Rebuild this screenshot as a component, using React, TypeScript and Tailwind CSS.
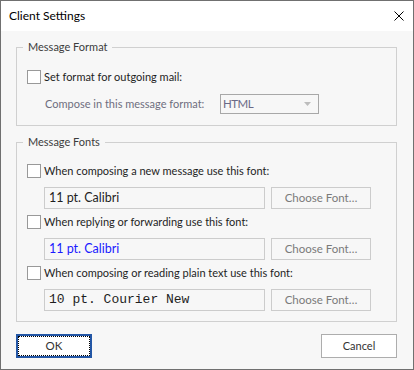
import React from "react";

const font = { fontFamily: 'Lato, "Open Sans", sans-serif' };

function Check({ label }: { label: string }) {
  return (
    <div className="flex items-center h-[14px]">
      <div className="w-[14px] h-[14px] border border-[#999999] bg-white shrink-0" />
      <span className="ml-[3px] text-[11px] leading-[14px] text-[#1e1e1e] whitespace-nowrap">{label}</span>
    </div>
  );
}

function FontRow({ value, blue, mono }: { value: string; blue?: boolean; mono?: boolean }) {
  return (
    <div className="flex items-center mt-[9px] ml-[17px]">
      <div className="w-[221px] h-[22px] border border-[#cccccc] bg-[#f7f7f7] flex items-center pl-[4px]">
        {mono ? (
          <span className="text-[13px] text-[#1e1e1e] whitespace-nowrap" style={{ fontFamily: '"Liberation Mono", monospace' }}>
            {value}
          </span>
        ) : (
          <span className={"text-[12.5px] whitespace-nowrap " + (blue ? "text-[#1a1aff]" : "text-[#1e1e1e]")}>{value}</span>
        )}
      </div>
      <div className="ml-[6px] w-[100px] h-[22px] border border-[#cccccc] bg-[#f7f7f7] flex items-center justify-center text-[11.5px] text-[#7a7a7a]">
        Choose Font…
      </div>
    </div>
  );
}

export default function App() {
  return (
    <div className="w-[414px] h-[370px] border border-[#707070] bg-[#f7f7f7] flex flex-col" style={font}>
      <div className="h-[30px] bg-white flex items-center justify-between pl-[8px] pr-[9px] shrink-0">
        <span className="text-[12px] text-black">Client Settings</span>
        <svg width="10" height="10" viewBox="0 0 10 10">
          <path d="M0.5 0.5 L9.5 9.5 M9.5 0.5 L0.5 9.5" stroke="#000" strokeWidth="1" />
        </svg>
      </div>
      <div className="flex-1 pl-[15px] pr-[16px] pt-[8px]">
        <fieldset className="border border-[#d0d0d0] pb-[11px]">
          <legend className="ml-[6px] px-[5px] text-[11px] leading-[16px] text-[#3c3c3c]">Message Format</legend>
          <div className="pl-[10px] mt-[15px]">
            <Check label="Set format for outgoing mail:" />
            <div className="flex items-center mt-[10px] ml-[18px]">
              <span className="text-[11px] text-[#6e6e7e] w-[175px] whitespace-nowrap">Compose in this message format:</span>
              <div className="w-[99px] h-[20px] border border-[#a8a8a8] bg-[#f7f7f7] flex items-center justify-between pl-[2px] pr-[7px]">
                <span className="text-[11.5px] text-[#6a6a86] tracking-[-0.5px]">HTML</span>
                <svg width="7" height="4" viewBox="0 0 7 4">
                  <path d="M0 0 L7 0 L3.5 4 Z" fill="#bdbdbd" />
                </svg>
              </div>
            </div>
          </div>
        </fieldset>
        <fieldset className="border border-[#d0d0d0] mt-[8px] pb-[10px]">
          <legend className="ml-[6px] px-[5px] text-[11px] leading-[16px] text-[#3c3c3c]">Message Fonts</legend>
          <div className="pl-[10px] mt-[14px]">
            <Check label="When composing a new message use this font:" />
            <FontRow value="11 pt. Calibri" />
            <div className="mt-[6px]">
              <Check label="When replying or forwarding use this font:" />
            </div>
            <FontRow value="11 pt. Calibri" blue />
            <div className="mt-[6px]">
              <Check label="When composing or reading plain text use this font:" />
            </div>
            <FontRow value="10 pt. Courier New" mono />
          </div>
        </fieldset>
        <div className="flex justify-between mt-[12px]">
          <div className="w-[76px] h-[24px] border-2 border-[#2356a5] bg-white">
            <div className="w-full h-full border border-dotted border-black flex items-center justify-center text-[11.5px] text-[#333333]">
              OK
            </div>
          </div>
          <div className="w-[76px] h-[24px] border border-[#adadad] bg-white flex items-center justify-center text-[11px] text-[#333333]">
            Cancel
          </div>
        </div>
      </div>
    </div>
  );
}
